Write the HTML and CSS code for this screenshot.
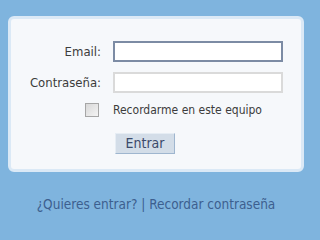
FILE: index.html
```html
<!DOCTYPE html>
<html>
<head>
  <title>Entrar</title>
  <link rel="stylesheet" href="styles.css">
</head>
<body>
  <div class="page">
    <form class="login-box">
      <label class="field-label" for="email">Email:</label>
      <input type="text" id="email" class="field-input focused">

      <label class="field-label" for="password">Contraseña:</label>
      <input type="password" id="password" class="field-input">

      <div class="check-cell"><span class="checkbox"></span></div>
      <label class="remember">Recordarme en este equipo</label>

      <div></div>
      <div class="actions"><button type="button" class="submit-btn">Entrar</button></div>
    </form>

    <div class="links">
      <a href="#">¿Quieres entrar?</a> | <a href="#">Recordar contraseña</a>
    </div>
  </div>
</body>
</html>
```

FILE: styles.css
```css
body {
  margin: 0;
  background-color: #7fb4de;
  font-family: 'DejaVu Sans Condensed', 'DejaVu Sans', sans-serif;
  font-stretch: condensed;
  font-size: 13px;
  color: #3a3a3a;
}

.page {
  width: 296px;
  padding: 16px 0 0 8px;
}

.login-box {
  display: grid;
  grid-template-columns: 90px 170px;
  column-gap: 12px;
  row-gap: 10px;
  align-items: center;
  align-content: start;
  height: 156px;
  box-sizing: border-box;
  margin: 0;
  padding: 22px 0 0 0;
  background-color: #f6f8fb;
  border: 3px solid #dbe9f6;
  border-radius: 6px;
}

.field-label {
  text-align: right;
  color: #3c3c3c;
}

.field-input {
  height: 21px;
  box-sizing: border-box;
  margin: 0;
  padding: 0 4px;
  border: 2px solid #dadada;
  background-color: #ffffff;
}

.field-input.focused {
  border-color: #7c8ba4;
}

.check-cell {
  display: flex;
  justify-content: flex-end;
  padding-right: 2px;
}

.checkbox {
  display: block;
  width: 12px;
  height: 12px;
  border: 1px solid #a6a6a6;
  background: linear-gradient(135deg, #d8d8d8, #f4f4f4);
}

.remember {
  font-size: 12px;
  color: #3c3c3c;
}

.actions {
  padding: 6px 0 0 2px;
}

.submit-btn {
  width: 60px;
  height: 21px;
  padding: 0;
  font-family: 'DejaVu Sans Condensed', 'DejaVu Sans', sans-serif;
  font-stretch: condensed;
  font-size: 14px;
  line-height: 19px;
  color: #3b4a6b;
  background-color: #d3dde8;
  border: 1px solid #e6edf4;
  border-right-color: #9fb6cf;
  border-bottom-color: #9fb6cf;
}

.links {
  margin-top: 24px;
  text-align: center;
  font-size: 13.5px;
  color: #3d5f8f;
}

.links a {
  color: #3d5f8f;
  text-decoration: none;
}
```
